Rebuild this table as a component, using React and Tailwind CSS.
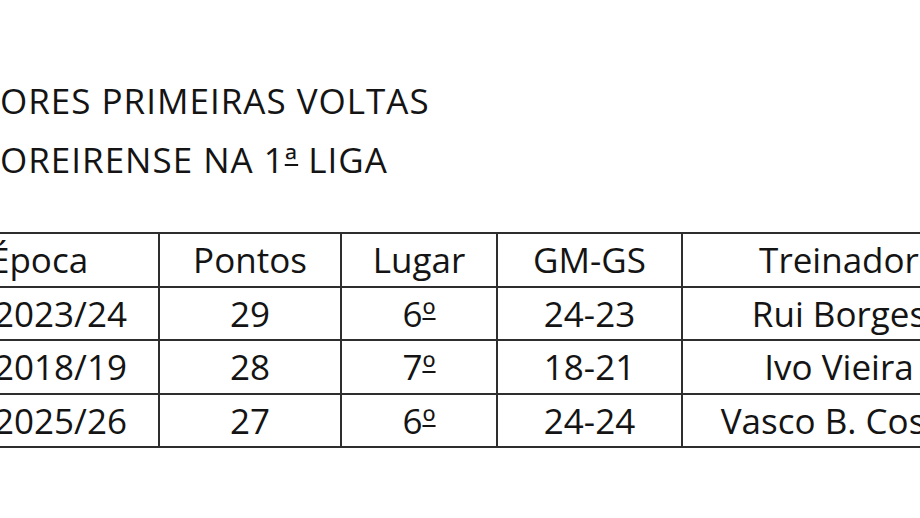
import React from 'react';

const rows = [
  { epoca: '2023/24', pontos: '29', lugar: '6', golos: '24-23', treinador: 'Rui Borges' },
  { epoca: '2018/19', pontos: '28', lugar: '7', golos: '18-21', treinador: 'Ivo Vieira' },
  { epoca: '2025/26', pontos: '27', lugar: '6', golos: '24-24', treinador: 'Vasco B. Costa' },
];

const cell = 'border-2 border-[#2e2e2e] h-[51.5px] p-0 align-middle leading-[51.5px] whitespace-nowrap overflow-hidden';

// ordinal indicator drawn Calibri-style, with the small bar under it
function Ord({ children }) {
  return (
    <span className="underline decoration-2 underline-offset-[-9px] [text-decoration-skip-ink:none]">{children}</span>
  );
}

export default function App() {
  return (
    <div className="w-[920px] h-[518px] overflow-hidden bg-white text-[#141414] font-['Open_Sans',sans-serif] text-[35px]">
      <div className="pt-[71px] leading-[59px] tracking-[1px]">
        <p>ORES PRIMEIRAS VOLTAS</p>
        <p>OREIRENSE NA 1<Ord>ª</Ord> LIGA</p>
      </div>

      <table className="mt-[43px] ml-[-40px] w-[1035px] table-fixed border-collapse">
        <colgroup>
          <col className="w-[198px]" />
          <col className="w-[182px]" />
          <col className="w-[156px]" />
          <col className="w-[185px]" />
          <col className="w-[314px]" />
        </colgroup>
        <thead>
          <tr>
            <th className={`${cell} font-normal text-left pl-[28px]`}>Época</th>
            <th className={`${cell} font-normal text-center`}>Pontos</th>
            <th className={`${cell} font-normal text-center`}>Lugar</th>
            <th className={`${cell} font-normal text-center`}>GM-GS</th>
            <th className={`${cell} font-normal text-center`}>Treinador</th>
          </tr>
        </thead>
        <tbody>
          {rows.map((r) => (
            <tr key={r.epoca}>
              <td className={`${cell} text-left pl-[32px]`}>{r.epoca}</td>
              <td className={`${cell} text-center`}>{r.pontos}</td>
              <td className={`${cell} text-center`}>{r.lugar}<Ord>º</Ord></td>
              <td className={`${cell} text-center`}>{r.golos}</td>
              <td className={`${cell} text-center`}>{r.treinador}</td>
            </tr>
          ))}
        </tbody>
      </table>
    </div>
  );
}
